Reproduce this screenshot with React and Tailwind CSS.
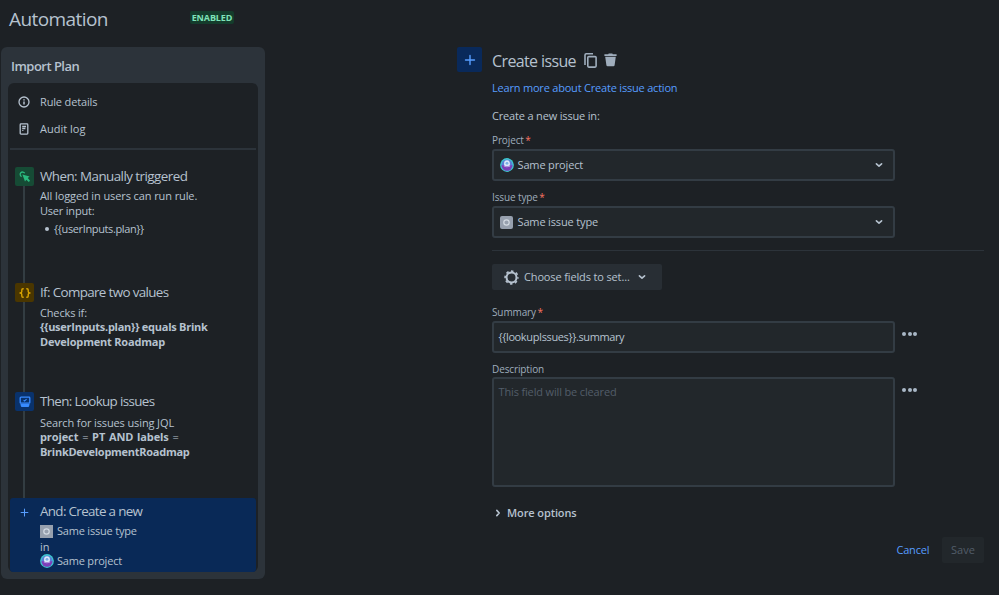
const PlusIcon = ({ className }) => (
  <svg className={className} viewBox="0 0 12 12" fill="none" stroke="currentColor" strokeWidth="1.4" strokeLinecap="round">
    <path d="M6 1.5v9M1.5 6h9" />
  </svg>
);

const ChevronIcon = ({ className }) => (
  <svg className={className} viewBox="0 0 8 8" fill="none" stroke="currentColor" strokeWidth="1.6" strokeLinecap="round" strokeLinejoin="round">
    <path d="M1.4 2.8 4 5.2l2.6-2.4" />
  </svg>
);

const InfoIcon = () => (
  <svg className="w-3 h-3" viewBox="0 0 12 12" fill="none" stroke="currentColor">
    <circle cx="6" cy="6" r="5" strokeWidth="1.3" />
    <path d="M6 5.4v3.2" strokeWidth="1.5" />
    <path d="M6 3.2v1.4" strokeWidth="1.5" />
  </svg>
);

const LogIcon = () => (
  <svg className="w-3 h-3" viewBox="0 0 12 12" fill="none" stroke="currentColor">
    <rect x="2.2" y="0.9" width="7.6" height="10.2" rx="0.8" strokeWidth="1.3" />
    <path d="M4.2 3.6h3.8M4.2 5.4h3.2" strokeWidth="1.5" />
    <path d="M4.2 7.5h1.2" strokeWidth="1.2" />
  </svg>
);

const CursorIcon = () => (
  <svg className="w-3 h-3" viewBox="0 0 12 12" fill="none">
    <path d="M2.6 5.6A2.4 2.4 0 1 1 5.7 2.3" stroke="currentColor" strokeWidth="1.3" />
    <path d="M3.4 3.4 10.6 5.6 8.8 7 11 9.7 9.8 10.9 7.3 8.7 6 10.4Z" fill="currentColor" />
  </svg>
);

const BracesIcon = () => (
  <svg className="w-3 h-3" viewBox="0 0 12 12" fill="none" stroke="currentColor" strokeWidth="1.4" strokeLinejoin="round">
    <path d="M4.7 1.7H4c-.8 0-1.2.4-1.2 1.2v1.6C2.8 5.4 2.3 6 1 6c1.3 0 1.8.6 1.8 1.5v1.6c0 .8.4 1.2 1.2 1.2h.7" />
    <path d="M7.3 1.7H8c.8 0 1.2.4 1.2 1.2v1.6c0 .9.5 1.5 1.8 1.5-1.3 0-1.8.6-1.8 1.5v1.6c0 .8-.4 1.2-1.2 1.2h-.7" />
  </svg>
);

const LookupIcon = () => (
  <svg className="w-3 h-3" viewBox="0 0 12 12" fill="none" stroke="currentColor">
    <rect x="1.2" y="1.2" width="9.6" height="6" rx="0.8" strokeWidth="1.3" />
    <path d="M4.6 4.2 5.6 5 7.6 3.2" strokeWidth="1.1" />
    <path d="M1.4 8h9.2l-.5 2.2a1 1 0 0 1-1 .8H2.9a1 1 0 0 1-1-.8Z" fill="currentColor" stroke="none" />
  </svg>
);

const CopyIcon = () => (
  <svg className="w-[13px] h-[15px]" viewBox="0 0 13 15" fill="none" stroke="currentColor" strokeWidth="1.6">
    <path d="M1 12V2a1.2 1.2 0 0 1 1.2-1.2H9" />
    <rect x="3.8" y="3.6" width="8.3" height="10.5" rx="1" />
  </svg>
);

const TrashIcon = () => (
  <svg className="w-[13px] h-[14px]" viewBox="0 0 13 14" fill="currentColor">
    <path d="M.4 1.3h3.8L4.7.4h3.6l.5.9h3.8V3.1H.4Z" />
    <path d="M1.2 3.8h10.6l-1.2 8.5a1.2 1.2 0 0 1-1.2 1H3.6a1.2 1.2 0 0 1-1.2-1Z" />
  </svg>
);

const GearIcon = () => (
  <svg className="w-[15px] h-[15px]" viewBox="0 0 15 15" fill="none" stroke="currentColor">
    <circle cx="7.5" cy="7.5" r="5" strokeWidth="2" />
    <circle cx="7.5" cy="7.5" r="6.4" strokeWidth="1.6" strokeDasharray="2.5 2.527" strokeDashoffset="1.25" />
  </svg>
);

const ProjectAvatar = () => (
  <svg className="w-[14px] h-[14px] -mr-px shrink-0" viewBox="0 0 13 13">
    <circle cx="6.5" cy="6.5" r="6.4" fill="#3cc8cf" />
    <circle cx="6.5" cy="6.5" r="5.1" fill="#5a7fd6" />
    <path d="M1.4 6.8h10.2a5.1 5.1 0 0 1-10.2 0Z" fill="#7c3fb8" />
    <path d="M3.8 6.9V4.9a2.7 2.7 0 0 1 5.4 0v2c-1.5.8-3.9.8-5.4 0Z" fill="#dbe8fa" />
    <circle cx="6.5" cy="4.9" r="1.3" fill="#79aee4" />
    <path d="M3.6 7c1.8.9 4 .9 5.8 0v.8c-1.700.9-4.100.9-5.800 0Z" fill="#b59be2" />
  </svg>
);

const IssueTypeAvatar = ({ className }) => (
  <svg className={className} viewBox="0 0 13 13" fill="none">
    <rect width="13" height="13" fill="#97a0ae" />
    <circle cx="6.5" cy="6.5" r="2.7" stroke="#d3dae2" strokeWidth="1.2" />
  </svg>
);

const Label = ({ children, required, className }) => (
  <div className={`h-[15px] leading-[16px] text-[10px] font-medium tracking-[-0.12px] text-[#9fadbc] whitespace-nowrap ${className}`}>
    {children}
    {required && <span className="text-[#f87462] ml-[1.5px]">*</span>}
  </div>
);

const Select = ({ icon, children }) => (
  <div className="flex items-center w-[403px] h-8 rounded-[3px] border-2 border-[#333c44] bg-[#22272b] pl-[6px] pr-[10px]">
    {icon}
    <span className="ml-[4.5px] flex-1 tracking-[-0.15px]">{children}</span>
    <ChevronIcon className="w-2 h-2" />
  </div>
);

const Dots = () => (
  <div className="flex gap-[1.7px] ml-[7px] mt-[11px]">
    <span className="w-[4px] h-[4px] rounded-full bg-[#a9b7c7]" />
    <span className="w-[4px] h-[4px] rounded-full bg-[#a9b7c7]" />
    <span className="w-[4px] h-[4px] rounded-full bg-[#a9b7c7]" />
  </div>
);

// One node of the rule chain, with the connector running down to the next one
const Step = ({ icon, badge, title, height, children }) => (
  <div className={`flex pl-[5px] ${height}`}>
    <div className="flex flex-col items-center w-[19px] shrink-0">
      <div className={`flex items-center justify-center w-[19px] h-[19px] rounded-[2px] shrink-0 ${badge}`}>{icon}</div>
      <div className="w-[2px] mr-[1px] flex-1 bg-[#333d42]" />
    </div>
    <div className="ml-[6px] whitespace-nowrap">
      <h3 className="h-[19px] leading-[18px] text-[13.4px] tracking-[-0.64px]">{title}</h3>
      {children}
    </div>
  </div>
);

const Sidebar = () => (
  <aside className="w-[264px] h-[532px] ml-px mt-[8px] rounded-[6px] bg-[#2c333a] px-[7px] pb-[7px] flex flex-col">
    <h2 className="h-[36px] pl-[3px] pt-[2px] leading-[34px] text-[13px] font-semibold tracking-[-0.52px]">Import Plan</h2>
    <div className="flex-1 w-[250px] rounded-[6px] bg-[#1d2125] px-[2px] pt-[9px]">
      <div className="flex items-center h-[18px] mt-[1px] pl-[8px]">
        <InfoIcon />
        <span className="ml-[10px] tracking-[-0.15px]">Rule details</span>
      </div>
      <div className="flex items-center h-[18px] mt-[9px] pl-[8px]">
        <LogIcon />
        <span className="ml-[10px]">Audit log</span>
      </div>
      <div className="h-[2px] mt-[10px] mb-[17px] bg-[#2c333a]" />

      <Step
        height="h-[116px]"
        badge="bg-[#164b35] text-[#2abb7f]"
        icon={<CursorIcon />}
        title={<span className="tracking-[-0.55px]">When: Manually triggered</span>}
      >
        <p className="mt-[2px] leading-[15px] tracking-[-0.1px]">All logged in users can run rule.</p>
        <p className="leading-[15px] tracking-[-0.2px]">User input:</p>
        <div className="flex items-center mt-[3px] ml-[5px] leading-[16px]">
          <span className="w-[4px] h-[4px] rounded-full bg-[#b6c2cf] mr-[5px]" />
          <span className="tracking-[-0.37px]">{'{{userInputs.plan}}'}</span>
        </div>
      </Step>

      <Step
        height="h-[109px]"
        badge="bg-[#4a3600] text-[#d9a400]"
        icon={<BracesIcon />}
        title="If: Compare two values"
      >
        <p className="mt-[3px] leading-[15px] tracking-[-0.15px]">Checks if:</p>
        <p className="leading-[14.5px] font-bold tracking-[-0.26px]">{'{{userInputs.plan}}'} equals Brink</p>
        <p className="leading-[14.5px] font-bold tracking-[-0.2px]">Development Roadmap</p>
      </Step>

      <Step
        height="h-[106px]"
        badge="bg-[#09326c] text-[#388bff]"
        icon={<LookupIcon />}
        title="Then: Lookup issues"
      >
        <p className="mt-[4px] leading-[15px] tracking-[-0.12px]">Search for issues using JQL</p>
        <p className="leading-[14.5px] font-bold tracking-[-0.1px] [word-spacing:1px]">
          project <span className="font-normal">=</span> PT AND labels <span className="font-normal">=</span>
        </p>
        <p className="leading-[14.5px] font-bold tracking-[-0.27px]">BrinkDevelopmentRoadmap</p>
      </Step>

      <div className="flex w-[246px] h-[74px] rounded-[3px] bg-[#092957] pl-[10px] pt-[4px]">
        <PlusIcon className="w-[9px] h-[9px] mt-[6px] text-[#579dff] shrink-0" />
        <div className="ml-[11px] whitespace-nowrap">
          <h3 className="h-[21px] leading-[18px] text-[13.4px] tracking-[-0.66px]">And: Create a new</h3>
          <div className="flex items-center h-[16px]">
            <IssueTypeAvatar className="w-[13px] h-[13px]" />
            <span className="ml-[4px] tracking-[-0.2px]">Same issue type</span>
          </div>
          <p className="leading-[15px]">in</p>
          <div className="flex items-center h-[14px]">
            <ProjectAvatar />
            <span className="ml-[4px] tracking-[-0.2px]">Same project</span>
          </div>
        </div>
      </div>
    </div>
  </aside>
);

const ActionForm = () => (
  <main className="ml-[192px] mt-[47px] flex">
    <div className="flex items-center justify-center w-[25px] h-[25px] rounded-[2px] bg-[#09295a] text-[#579dff] shrink-0">
      <PlusIcon className="w-3 h-3" />
    </div>
    <div className="ml-[10px] w-[492px] whitespace-nowrap">
      <div className="flex items-center h-[28px]">
        <h2 className="w-[92px] text-[16px] leading-[28px] tracking-[-0.62px]">Create issue</h2>
        <div className="flex gap-[7px] items-center -mt-[2px] text-[#9fadbc]">
          <CopyIcon />
          <TrashIcon />
        </div>
      </div>
      <a className="block h-[16px] mt-[5px] leading-[16px] text-[#579dff] tracking-[-0.2px]">Learn more about Create issue action</a>
      <p className="h-[16px] mt-[12px] leading-[16px] tracking-[-0.17px]">Create a new issue in:</p>

      <Label required className="mt-[8px]">Project</Label>
      <div className="mt-[2px]">
        <Select icon={<ProjectAvatar />}>Same project</Select>
      </div>
      <Label required className="mt-[8px]">Issue type</Label>
      <div className="mt-[2px]">
        <Select icon={<IssueTypeAvatar className="w-[13px] h-[13px] rounded-[2px]" />}>Same issue type</Select>
      </div>

      <div className="h-[1px] mt-[12px] bg-[#2c333a]" />

      <button className="flex items-center w-[170px] h-[26px] mt-[13px] rounded-[2px] bg-[#282e34] pl-[12px]">
        <GearIcon />
        <span className="ml-[5px] w-[114px] text-left tracking-[-0.14px]">Choose fields to set...</span>
        <ChevronIcon className="w-2 h-2" />
      </button>

      <Label required className="mt-[14px]">Summary</Label>
      <div className="flex mt-[2px]">
        <div className="w-[403px] h-8 rounded-[3px] border-2 border-[#333c44] bg-[#22272b] px-[4.5px] leading-[28px] tracking-[-0.38px]">
          {'{{lookupIssues}}.summary'}
        </div>
        <Dots />
      </div>

      <Label className="mt-[8px]">Description</Label>
      <div className="flex mt-[1px]">
        <div className="w-[403px] h-[110px] rounded-[3px] border-2 border-[#333c44] bg-[#22272b] px-[4.5px] pt-[5px] leading-[16px] tracking-[-0.15px] text-[#525d69]">
          This field will be cleared
        </div>
        <Dots />
      </div>

      <div className="flex items-center h-[16px] mt-[18px] pl-[2px] font-semibold">
        <ChevronIcon className="w-2 h-2 -rotate-90" />
        <span className="ml-[5px] tracking-[-0.1px]">More options</span>
      </div>

      <div className="flex justify-end items-center mt-[16px]">
        <a className="mr-[12.5px] text-[#579dff] tracking-[-0.15px]">Cancel</a>
        <button className="w-[42px] h-[26px] rounded-[2px] bg-[#22272b] text-[#525d69]">Save</button>
      </div>
    </div>
  </main>
);

export default function App() {
  return (
    <div className="flex w-[999px] h-[595px] overflow-hidden bg-[#1d2125] text-[#b6c2cf] text-[11px] font-['Open_Sans','Noto_Sans',sans-serif]">
      <div className="w-[265px] shrink-0">
        <header className="flex items-start h-[39px] pl-[9px]">
          <h1 className="w-[181px] pt-[6px] text-[19px] leading-[26px] tracking-[-0.58px]">Automation</h1>
          <span className="mt-[11px] w-[44px] h-[13px] rounded-[2px] bg-[#143c2c] text-center text-[9px] leading-[14px] font-bold tracking-[-0.1px] text-[#7ee2b8]">
            ENABLED
          </span>
        </header>
        <Sidebar />
      </div>
      <ActionForm />
    </div>
  );
}
